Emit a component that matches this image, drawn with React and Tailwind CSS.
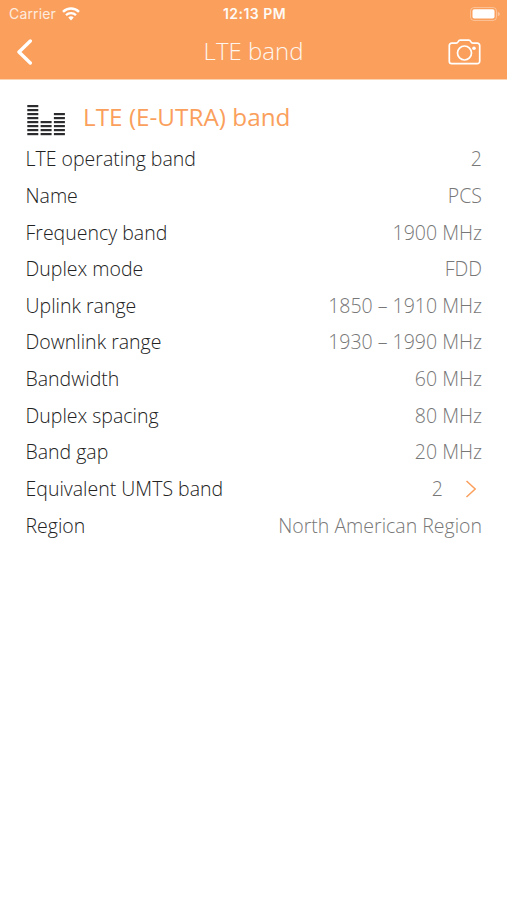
import React from "react";

const rows = [
  { label: "LTE operating band", value: "2" },
  { label: "Name", value: "PCS" },
  { label: "Frequency band", value: "1900 MHz" },
  { label: "Duplex mode", value: "FDD" },
  { label: "Uplink range", value: "1850 – 1910 MHz" },
  { label: "Downlink range", value: "1930 – 1990 MHz" },
  { label: "Bandwidth", value: "60 MHz" },
  { label: "Duplex spacing", value: "80 MHz" },
  { label: "Band gap", value: "20 MHz" },
  { label: "Equivalent UMTS band", value: "2", link: true },
  { label: "Region", value: "North American Region" },
];

// number of stripes in each column of the band icon
const columns = [8, 4, 6];

function StatusBar() {
  return (
    <div className="grid h-[27px] grid-cols-[1fr_auto_1fr] items-center pr-[7px] pl-[9px] font-['Inter',sans-serif]">
      <div className="flex items-center gap-[6px]">
        <span className="pb-px text-[14px] tracking-[0.15px] opacity-80">Carrier</span>
        <svg className="h-[14px] w-[18px]" viewBox="0 0 18 14" fill="none">
          <path d="M1 4.8a11.5 11.5 0 0 1 16 0" stroke="white" strokeWidth="2.5" />
          <path d="M4 8.1a7.2 7.2 0 0 1 10 0" stroke="white" strokeWidth="2.3" />
          <path d="M6.3 10.6a3.9 3.9 0 0 1 5.4 0L9 13.5z" fill="white" />
        </svg>
      </div>
      <span className="pb-px text-[14px] font-semibold tracking-[0.45px] whitespace-nowrap opacity-95">
        12:13 PM
      </span>
      <svg className="h-[14px] w-[30px] justify-self-end" viewBox="0 0 30 14">
        <rect x="0.5" y="0.5" width="26" height="13" rx="3.5" fill="none" stroke="white" strokeOpacity="0.35" />
        <rect x="2.5" y="2.3" width="22" height="9.2" rx="1.8" fill="white" />
        <path d="M27.8 5a2 2 0 0 1 0 4z" fill="white" fillOpacity="0.4" />
      </svg>
    </div>
  );
}

function NavBar() {
  return (
    <div className="grid h-[50px] grid-cols-[1fr_auto_1fr] items-center pr-[26px] pl-[16px]">
      <button>
        <svg className="h-[26px] w-[18px]" viewBox="0 0 18 26" fill="none">
          <path d="M14.3 2L3 13l11.3 11" stroke="white" strokeWidth="3.4" strokeLinecap="round" strokeLinejoin="round" />
        </svg>
      </button>
      <h1 className="pb-[3px] pl-[10px] text-[24px] font-light whitespace-nowrap opacity-90">
        LTE band
      </h1>
      <button className="justify-self-end">
        <svg className="h-[26px] w-[33px]" viewBox="0 0 33 26" fill="none" stroke="white" strokeWidth="1.7">
          <path d="M3.7 4.1H8.2c1 0 1.5-.5 2-1.4.5-1 1-1.5 2-1.5h8.6c1 0 1.5.5 2 1.5.5.9 1 1.4 2 1.4h4.5a2.4 2.4 0 0 1 2.4 2.4v15.8a2.4 2.4 0 0 1-2.4 2.4H3.7a2.4 2.4 0 0 1-2.4-2.4V6.5a2.4 2.4 0 0 1 2.4-2.4z" strokeLinejoin="round" />
          <circle cx="16.5" cy="14" r="7" />
          <circle cx="26" cy="9.3" r="1.8" fill="white" stroke="none" />
        </svg>
      </button>
    </div>
  );
}

function BandIcon() {
  return (
    <svg className="h-[31px] w-[39px]" viewBox="0 0 39 31" fill="#2c2c2e">
      {columns.map((count, index) =>
        Array.from({ length: count }).map((_, i) => (
          <rect key={`${index}-${i}`} x={1.3 + index * 13.3} y={28 - i * 4} width="11" height="2.2" />
        ))
      )}
    </svg>
  );
}

function App() {
  return (
    <div className="min-h-screen bg-white font-['Open_Sans',sans-serif]">
      <header className="h-[80px] border-b border-[#fbd3b3] bg-[#fa9f5c] text-white">
        <StatusBar />
        <NavBar />
      </header>

      <main className="pr-[25px] pl-[25.5px]">
        <div className="flex h-[60.6px] items-start gap-[18.5px] pt-[20px]">
          <div className="pt-[5px]">
            <BandIcon />
          </div>
          <h2 className="text-[24.3px] leading-[34px] text-[#fa9f5c]">
            LTE (E-UTRA) band
          </h2>
        </div>

        <ul>
          {rows.map((row) => (
            <li
              key={row.label}
              className="flex h-[36.65px] items-center justify-between text-[19.5px] font-light"
            >
              <span className="text-[#222222]">{row.label}</span>
              <span className="flex items-center text-[#777777]">
                {row.value}
                {row.link && (
                  <svg className="mr-[5px] ml-[22px] h-[18px] w-[12px]" viewBox="0 0 12 18" fill="none">
                    <path d="M1.5 1l8.7 8-8.7 8" stroke="#fa9f5c" strokeWidth="1.5" />
                  </svg>
                )}
              </span>
            </li>
          ))}
        </ul>
      </main>
    </div>
  );
}

export default App;
